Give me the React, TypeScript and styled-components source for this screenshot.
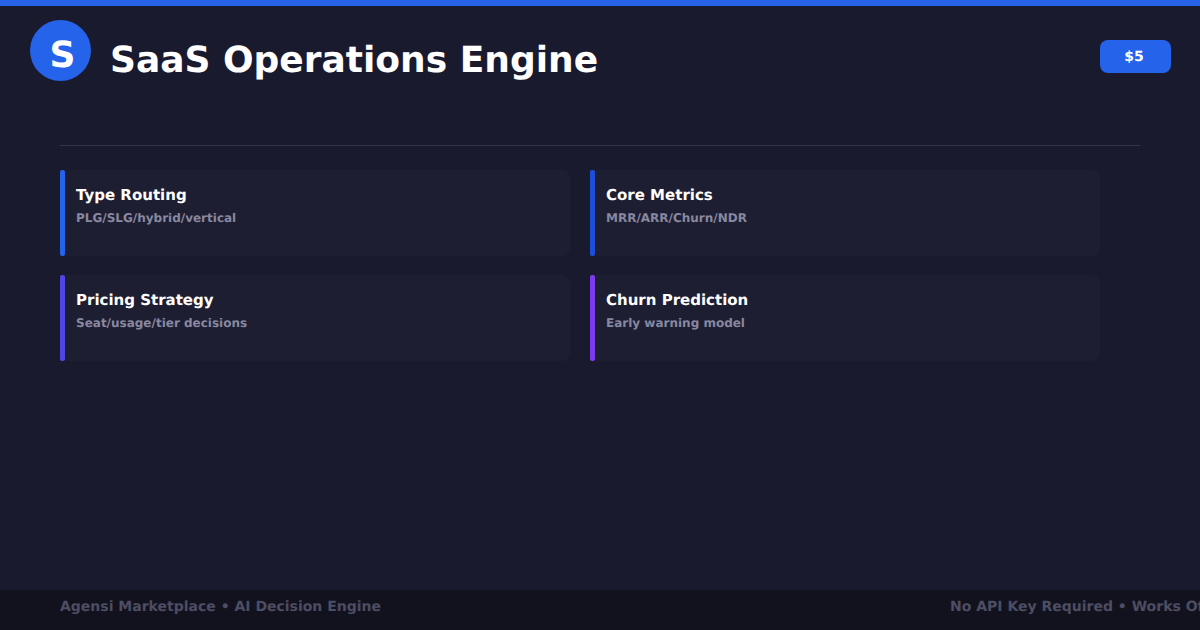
import React from 'react'
import styled, { createGlobalStyle } from 'styled-components'

const GlobalStyle = createGlobalStyle`
  html, body {
    margin: 0;
    padding: 0;
    background: #1a1a2e;
  }
`

const Page = styled.div`
  display: flex;
  flex-direction: column;
  width: 1200px;
  height: 630px;
  overflow: hidden;
  background: #1a1a2e;
  font-family: 'DejaVu Sans', sans-serif;
  text-rendering: geometricPrecision;
`

const TopBar = styled.div`
  height: 6px;
  flex-shrink: 0;
  background: #2563eb;
`

const Header = styled.div`
  display: flex;
  align-items: flex-start;
  height: 139px;
  flex-shrink: 0;
  padding: 14px 29px 0 30px;
  box-sizing: border-box;
`

const Logo = styled.div`
  display: flex;
  align-items: center;
  justify-content: center;
  width: 61px;
  height: 61px;
  padding: 9px 0 0 4px;
  box-sizing: border-box;
  flex-shrink: 0;
  border-radius: 50%;
  background: #2563eb;
  color: #fff;
  font-size: 36px;
  font-weight: 700;
`

const Title = styled.h1`
  flex: 1;
  margin: 0 0 0 19px;
  color: #fff;
  font-size: 36px;
  font-weight: 700;
  line-height: 42px;
  padding-top: 20px;
`

const Price = styled.div`
  display: flex;
  align-items: center;
  justify-content: center;
  width: 71px;
  height: 33px;
  margin-top: 20px;
  padding: 0 3px 0 0;
  box-sizing: border-box;
  border-radius: 8px;
  background: #2563eb;
  color: #fff;
  font-size: 14px;
  font-weight: 700;
`

const Divider = styled.div`
  height: 1px;
  flex-shrink: 0;
  margin: 0 60px;
  background: #33334a;
`

const Grid = styled.div`
  flex: 1;
  display: grid;
  grid-template-columns: 510px 510px;
  grid-auto-rows: 86px;
  gap: 19px 20px;
  align-content: start;
  padding: 24px 0 0 60px;
`

const Card = styled.div<{ $accent: string }>`
  position: relative;
  padding: 16px 16px 0;
  border-radius: 8px;
  background: #1e1e32;

  &::before {
    content: '';
    position: absolute;
    left: 0;
    top: 0;
    bottom: 0;
    width: 5px;
    border-radius: 2px;
    background: ${({ $accent }) => $accent};
  }
`

const CardTitle = styled.div`
  color: #fff;
  font-size: 15px;
  font-weight: 700;
  line-height: 18px;
`

const CardText = styled.div`
  margin-top: 7px;
  color: #8888a0;
  font-size: 12px;
  font-weight: 700;
  line-height: 15px;
`

const Footer = styled.div`
  display: flex;
  justify-content: space-between;
  height: 40px;
  flex-shrink: 0;
  padding: 9px 0 0 60px;
  box-sizing: border-box;
  background: #12121e;
  color: #4d4d63;
  font-size: 14px;
  line-height: 17px;
  font-weight: 700;
  white-space: nowrap;
`

const FooterRight = styled.div`
  width: 250px;
  overflow: hidden;
`

const cards = [
  { title: 'Type Routing', text: 'PLG/SLG/hybrid/vertical', accent: '#2563eb' },
  { title: 'Core Metrics', text: 'MRR/ARR/Churn/NDR', accent: '#1d4ed8' },
  { title: 'Pricing Strategy', text: 'Seat/usage/tier decisions', accent: '#4f46e5' },
  { title: 'Churn Prediction', text: 'Early warning model', accent: '#7c3aed' },
]

export default function App() {
  return (
    <Page>
      <GlobalStyle />
      <TopBar />
      <Header>
        <Logo>S</Logo>
        <Title>SaaS Operations Engine</Title>
        <Price>$5</Price>
      </Header>
      <Divider />
      <Grid>
        {cards.map((card) => (
          <Card key={card.title} $accent={card.accent}>
            <CardTitle>{card.title}</CardTitle>
            <CardText>{card.text}</CardText>
          </Card>
        ))}
      </Grid>
      <Footer>
        <div>Agensi Marketplace • AI Decision Engine</div>
        <FooterRight>No API Key Required • Works Offline</FooterRight>
      </Footer>
    </Page>
  )
}
